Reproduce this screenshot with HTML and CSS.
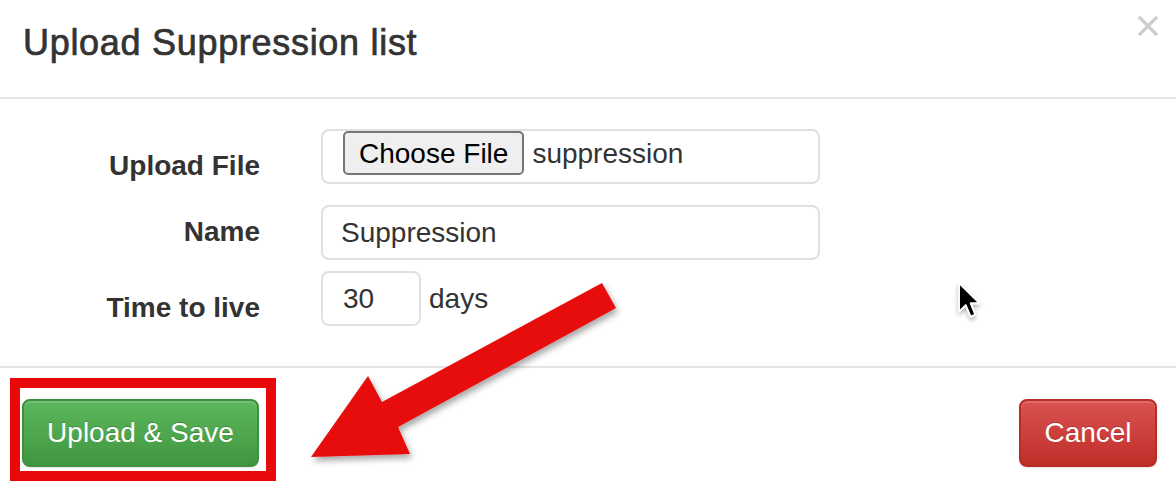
FILE: index.html
```html
<!DOCTYPE html>
<html>
<head>
<meta charset="utf-8">
<title>Upload Suppression list</title>
<link rel="stylesheet" href="styles.css">
</head>
<body>
<div class="modal">
  <div class="modal-header">
    <h4 class="modal-title">Upload Suppression list</h4>
    <svg class="close" width="20" height="20" viewBox="0 0 20 20"><path d="M2 2 L18 18 M18 2 L2 18" stroke="#cdcdcd" stroke-width="3.2" stroke-linecap="square"/></svg>
  </div>
  <div class="modal-body">
    <div class="form-row row-file">
      <label class="control-label">Upload File</label>
      <div class="form-control file-control">
        <span class="file-btn">Choose File</span>
        <span class="file-name">suppression</span>
      </div>
    </div>
    <div class="form-row row-name">
      <label class="control-label">Name</label>
      <div class="form-control text-control">Suppression</div>
    </div>
    <div class="form-row row-ttl">
      <label class="control-label">Time to live</label>
      <div class="ttl-group">
        <div class="form-control ttl-control">30</div>
        <span class="unit">days</span>
      </div>
    </div>
  </div>
  <div class="modal-footer">
    <div class="highlight">
      <button class="btn btn-success">Upload &amp; Save</button>
    </div>
    <button class="btn btn-danger">Cancel</button>
  </div>
  <svg class="overlay" width="1176" height="490" viewBox="0 0 1176 490">
    <defs>
      <filter id="sh" x="-20%" y="-20%" width="140%" height="140%">
        <feDropShadow dx="2" dy="4" stdDeviation="3" flood-color="#000" flood-opacity="0.35"/>
      </filter>
      <filter id="csh" x="-50%" y="-50%" width="200%" height="200%">
        <feDropShadow dx="0" dy="1.5" stdDeviation="1.2" flood-color="#000" flood-opacity="0.3"/>
      </filter>
    </defs>
    <polygon filter="url(#sh)" fill="#e80a0a" points="602,283 616,308 398,427 410,454 311,457 368,376 382,402"/>
    <g transform="translate(958,282) scale(1.8)" filter="url(#csh)">
      <path d="M0.6 0.6 L0.6 16.5 L4.3 12.8 L7 19.2 L9.6 18.1 L7 11.8 L12 11.8 Z" fill="#000" stroke="#fff" stroke-width="1" stroke-linejoin="round"/>
    </g>
  </svg>
</div>
</body>
</html>
```

FILE: styles.css
```css
* { box-sizing: border-box; }
html, body { margin: 0; padding: 0; background: #fff; }
body { font-family: "Liberation Sans", Arial, sans-serif; color: #333; }

.modal {
  position: relative;
  width: 1176px;
  height: 490px;
  overflow: hidden;
  background: #fff;
}

.modal-header {
  height: 99px;
  border-bottom: 2px solid #e5e5e5;
  display: flex;
  justify-content: space-between;
  align-items: flex-start;
  padding: 22px 18px 0 23px;
}
.modal-title {
  margin: 0;
  font-size: 36px;
  line-height: 42px;
  font-weight: normal;
  letter-spacing: 0.7px;
  -webkit-text-stroke: 0.7px #333;
  color: #333;
}
.close { margin-top: -6px; display: block; }

.modal-body {
  padding: 30px 0 40px 0;
  display: flex;
  flex-direction: column;
}
.form-row {
  display: grid;
  grid-template-columns: 260px 499px;
  column-gap: 61px;
  align-items: start;
}
.row-file { margin-bottom: 21px; }
.row-name { margin-bottom: 11px; }

.control-label {
  text-align: right;
  font-weight: bold;
  font-size: 28px;
  line-height: 32px;
  color: #333;
}
.row-file .control-label { padding-top: 21px; }
.row-name .control-label { padding-top: 11px; }
.row-ttl .control-label { padding-top: 21px; }

.form-control {
  height: 55px;
  border: 2px solid #e0e0e0;
  border-radius: 8px;
  font-size: 28px;
  line-height: 32px;
  color: #333;
  display: flex;
  align-items: center;
}
.text-control { padding: 1px 18px 0; }
.file-control { align-items: flex-start; padding: 0 20px; }
.file-btn {
  height: 44px;
  border: 2px solid #767676;
  border-radius: 5px;
  background: #efefef;
  color: #000;
  padding: 1px 14px 0;
  display: flex;
  align-items: center;
}
.file-name { margin-left: 8px; height: 44px; padding-top: 1px; display: flex; align-items: center; color: #333; }

.ttl-group { display: flex; align-items: center; }
.ttl-control { width: 100px; padding: 1px 20px 0; }
.unit { margin-left: 8px; font-size: 28px; line-height: 32px; color: #333; }

.modal-footer {
  border-top: 2px solid #e5e5e5;
  display: flex;
  justify-content: space-between;
  align-items: flex-start;
  padding: 10px 19px 0 10px;
}
.highlight {
  border: 10px solid #e8090a;
  padding: 11px 7px 4px 2px;
}
.btn {
  height: 68px;
  border-radius: 8px;
  font-family: "Liberation Sans", Arial, sans-serif;
  font-size: 28px;
  color: #fff;
  text-shadow: 0 -1px 0 rgba(0,0,0,0.2);
  box-shadow: inset 0 2px 0 rgba(255,255,255,0.15), 0 1px 2px rgba(0,0,0,0.1);
  display: block;
  padding: 0;
}
.btn-success {
  width: 237px;
  background: linear-gradient(to bottom, #5cb85c 0%, #419641 100%);
  border: 2px solid #3e8f3e;
}
.btn-danger {
  width: 138px;
  margin-top: 21px;
  background: linear-gradient(to bottom, #d9534f 0%, #c12e2a 100%);
  border: 2px solid #b92c28;
}

.overlay {
  position: absolute;
  left: 0;
  top: 0;
  pointer-events: none;
}
```
